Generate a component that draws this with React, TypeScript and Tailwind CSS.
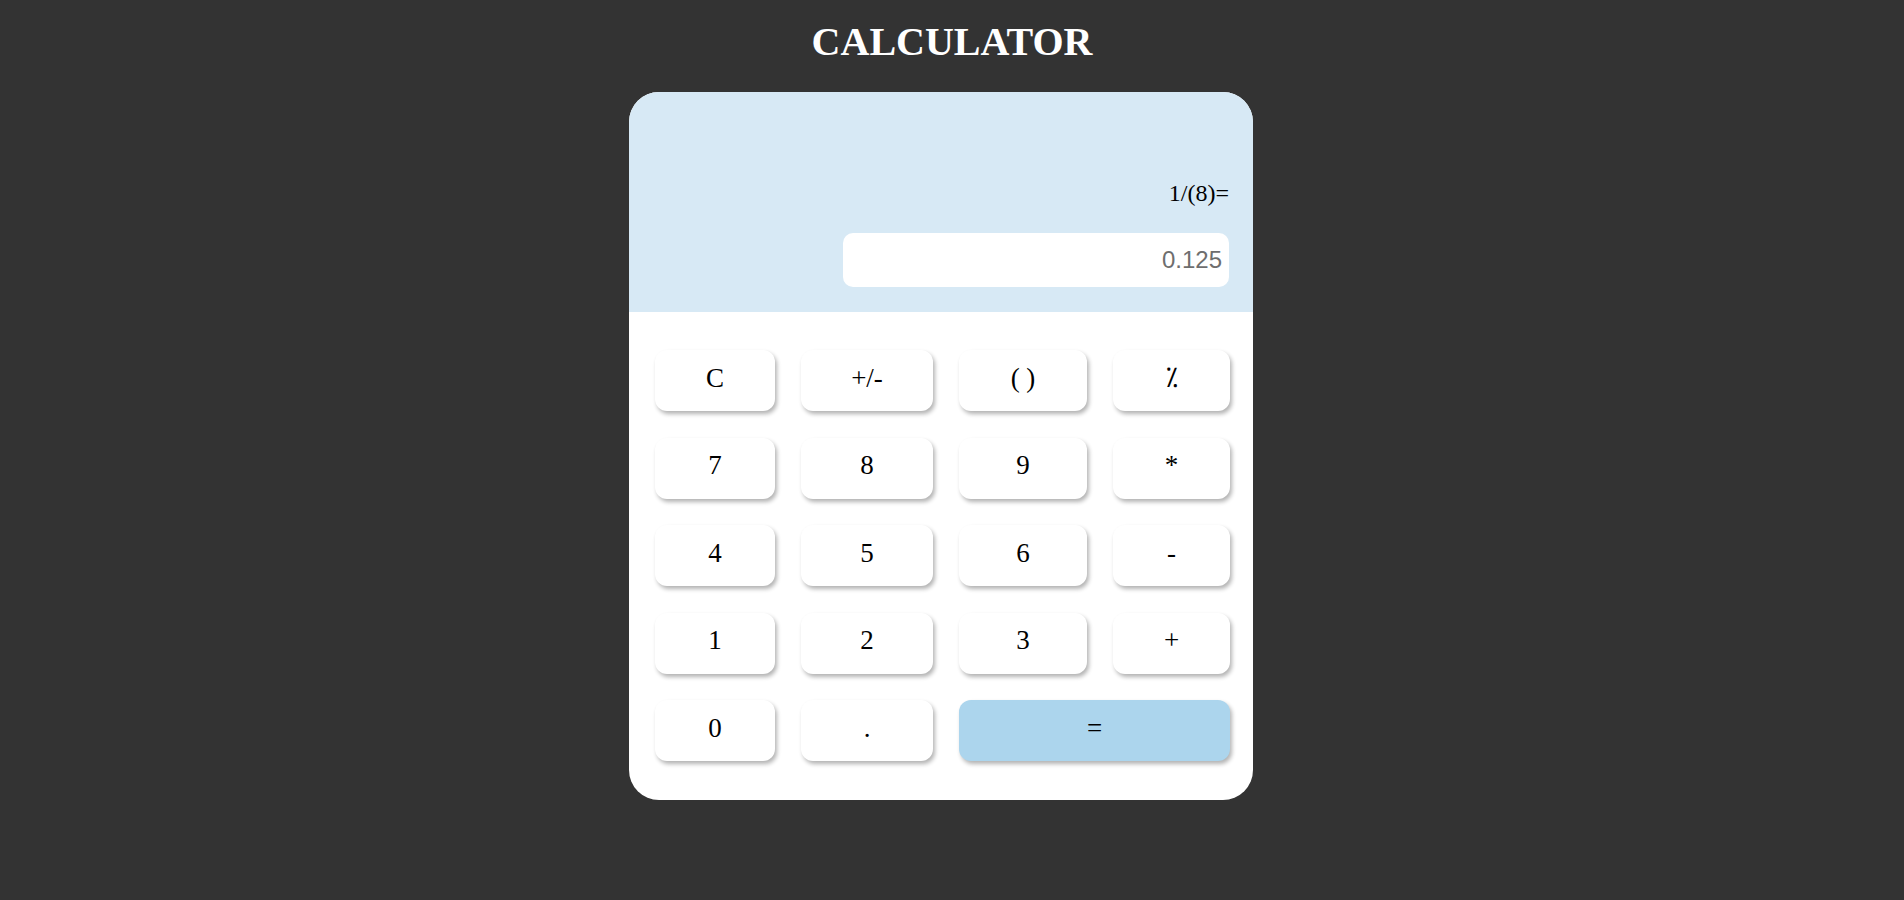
import { useState } from "react";

const keys: { label: string; wide?: boolean; accent?: boolean }[] = [
  { label: "C" },
  { label: "+/-" },
  { label: "( )" },
  { label: "\u2052" },
  { label: "7" },
  { label: "8" },
  { label: "9" },
  { label: "*" },
  { label: "4" },
  { label: "5" },
  { label: "6" },
  { label: "-" },
  { label: "1" },
  { label: "2" },
  { label: "3" },
  { label: "+" },
  { label: "0" },
  { label: "." },
  { label: "=", wide: true, accent: true },
];

export default function App() {
  const [expression] = useState("1/(8)=");
  const [result] = useState("0.125");

  return (
    <div className="flex min-h-screen flex-col items-center bg-[#333333] font-['Liberation_Serif',serif]">
      <h1 className="pt-[20px] text-[40px] leading-[44px] font-bold text-white">CALCULATOR</h1>

      <div className="mt-[28px] mr-[22px] w-[624px] overflow-hidden rounded-[30px] bg-white">
        {/* display */}
        <div className="flex h-[220px] flex-col items-end justify-end bg-[#d7e9f5] pr-[24px] pb-[25px]">
          <div className="mb-[26px] text-[24px] leading-[28px] text-black">{expression}</div>
          <input
            readOnly
            value={result}
            className="h-[54px] w-[386px] rounded-[10px] bg-white pr-[7px] text-right font-['Liberation_Sans',sans-serif] text-[24px] text-[#6e6e6e] outline-none"
          />
        </div>

        {/* keypad */}
        <div className="grid grid-cols-[120px_132px_128px_117px] gap-x-[26px] gap-y-[26.5px] pt-[38px] pb-[39px] pl-[26px]">
          {keys.map((k) => (
            <button
              key={k.label}
              className={
                "h-[61px] rounded-[12px] pb-[5px] text-[27px] leading-none text-black shadow-[2px_3px_4px_rgba(0,0,0,0.3)] " +
                (k.wide ? "col-span-2 " : "") +
                (k.accent ? "bg-[#acd5ed]" : "bg-white")
              }
            >
              {k.label}
            </button>
          ))}
        </div>
      </div>
    </div>
  );
}
